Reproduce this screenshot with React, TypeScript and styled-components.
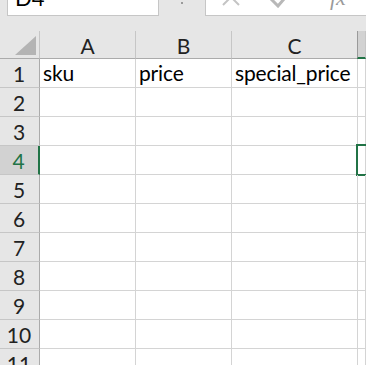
import React from "react";
import styled, { createGlobalStyle, css } from "styled-components";

const GREEN = "#217346";

const Global = createGlobalStyle`
  html, body { margin: 0; padding: 0; background: #e6e6e6; overflow: hidden; }
  body { font-family: "Lato", "Liberation Sans", sans-serif; }
`;

const Page = styled.div`
  width: 366px;
  height: 365px;
  overflow: hidden;
  background: #e6e6e6;
`;

const TopBar = styled.div`
  display: flex;
  height: 30px;
  margin-top: -14px;
`;

const NameBox = styled.div`
  margin-left: 7px;
  background: #fff;
  border: 1px solid #c6c6c6;
  font-family: "Lato", "Liberation Sans", sans-serif;
  font-size: 22px;
  line-height: 21px;
  padding-left: 7px;
  color: #000;
  box-sizing: border-box;
  width: 152px;
`;

const Splitter = styled.div`
  width: 46px;
  display: flex;
  justify-content: center;
  align-items: flex-start;
  padding-top: 16px;
  &::before {
    content: "";
    width: 2px;
    height: 2px;
    background: #9a9a9a;
  }
`;

const FormulaBox = styled.div`
  flex: 1;
  background: #fff;
  border: 1px solid #c6c6c6;
  border-right: none;
  display: flex;
  align-items: flex-start;
`;

const IconSvg = styled.svg<{ $ml: number }>`
  flex: none;
  display: block;
  margin-left: ${(p) => p.$ml}px;
  margin-top: -1px;
`;

const Fx = styled.span`
  font-family: "Liberation Serif", serif;
  font-style: italic;
  font-size: 22px;
  line-height: 22px;
  color: #9a9a9a;
  margin-left: 38px;
`;

const Gap = styled.div`
  height: 15px;
`;

const Grid = styled.div`
  display: grid;
  grid-template-columns: 40px 96px 96px 126px 1fr;
  grid-auto-rows: 29px;
  grid-template-rows: 28px;
  background: #fff;
`;

const CornerCell = styled.div`
  background: #e6e6e6;
  border-right: 1px solid #c6c6c6;
  border-bottom: 1px solid #ababab;
  display: flex;
  align-items: flex-end;
  justify-content: flex-end;
  padding: 0 3px 3px 0;
`;

const Triangle = styled.div`
  width: 0;
  height: 0;
  border-style: solid;
  border-width: 0 0 19px 21px;
  border-color: transparent transparent #b4b4b4 transparent;
`;

const ColHead = styled.div<{ $sel?: boolean }>`
  background: ${(p) => (p.$sel ? "#d2d2d2" : "#e6e6e6")};
  border-right: 1px solid #c6c6c6;
  border-bottom: 1px solid #ababab;
  display: flex;
  align-items: center;
  justify-content: center;
  font-size: 21px;
  color: #222;
  padding-top: 2px;
  box-sizing: border-box;
  ${(p) =>
    p.$sel &&
    css`
      border-left: 1px solid #9a9a9a;
      margin-left: -1px;
      border-bottom: 2px solid ${GREEN};
    `}
`;

const RowHead = styled.div<{ $sel?: boolean }>`
  background: ${(p) => (p.$sel ? "#d2d2d2" : "#e6e6e6")};
  border-right: 1px solid #ababab;
  border-bottom: 1px solid #c6c6c6;
  display: flex;
  align-items: center;
  justify-content: center;
  font-size: 21px;
  color: ${(p) => (p.$sel ? GREEN : "#222")};
  box-sizing: border-box;
  padding-right: 1px;
  ${(p) =>
    p.$sel &&
    css`
      border-right: 2px solid ${GREEN};
    `}
`;

const Cell = styled.div<{ $active?: boolean }>`
  border-right: 1px solid #d4d4d4;
  border-bottom: 1px solid #d4d4d4;
  font-size: 21px;
  letter-spacing: -0.15px;
  line-height: 28px;
  padding-left: 3px;
  color: #000;
  white-space: nowrap;
  position: relative;
  box-sizing: border-box;
  ${(p) =>
    p.$active &&
    css`
      &::after {
        content: "";
        position: absolute;
        left: -2px;
        top: -2px;
        right: -20px;
        bottom: -2px;
        border: 2px solid ${GREEN};
      }
    `}
`;

const cols = ["A", "B", "C", "D"];
const data: Record<number, string[]> = {
  1: ["sku", "price", "special_price", ""],
};

export default function App() {
  const rows = Array.from({ length: 11 }, (_, i) => i + 1);
  return (
    <Page>
      <Global />
      <TopBar>
        <NameBox>D4</NameBox>
        <Splitter />
        <FormulaBox>
          <IconSvg $ml={14} width="22" height="22" viewBox="0 0 22 22">
            <path d="M3 19 L19 3 M3 3 L19 19" stroke="#c4c4c4" strokeWidth="2" fill="none" />
          </IconSvg>
          <IconSvg $ml={26} width="24" height="22" viewBox="0 0 24 22">
            <path d="M3 13 L10 20 L22 6" stroke="#b8b8b8" strokeWidth="3" fill="none" />
          </IconSvg>
          <Fx>fx</Fx>
        </FormulaBox>
      </TopBar>
      <Gap />
      <Grid>
        <CornerCell>
          <Triangle />
        </CornerCell>
        {cols.map((c) => (
          <ColHead key={c} $sel={c === "D"}>
            {c === "D" ? "" : c}
          </ColHead>
        ))}
        {rows.map((r) => (
          <React.Fragment key={r}>
            <RowHead $sel={r === 4}>{r}</RowHead>
            {cols.map((c, ci) => (
              <Cell key={c} $active={r === 4 && c === "D"}>
                {data[r]?.[ci] ?? ""}
              </Cell>
            ))}
          </React.Fragment>
        ))}
      </Grid>
    </Page>
  );
}
